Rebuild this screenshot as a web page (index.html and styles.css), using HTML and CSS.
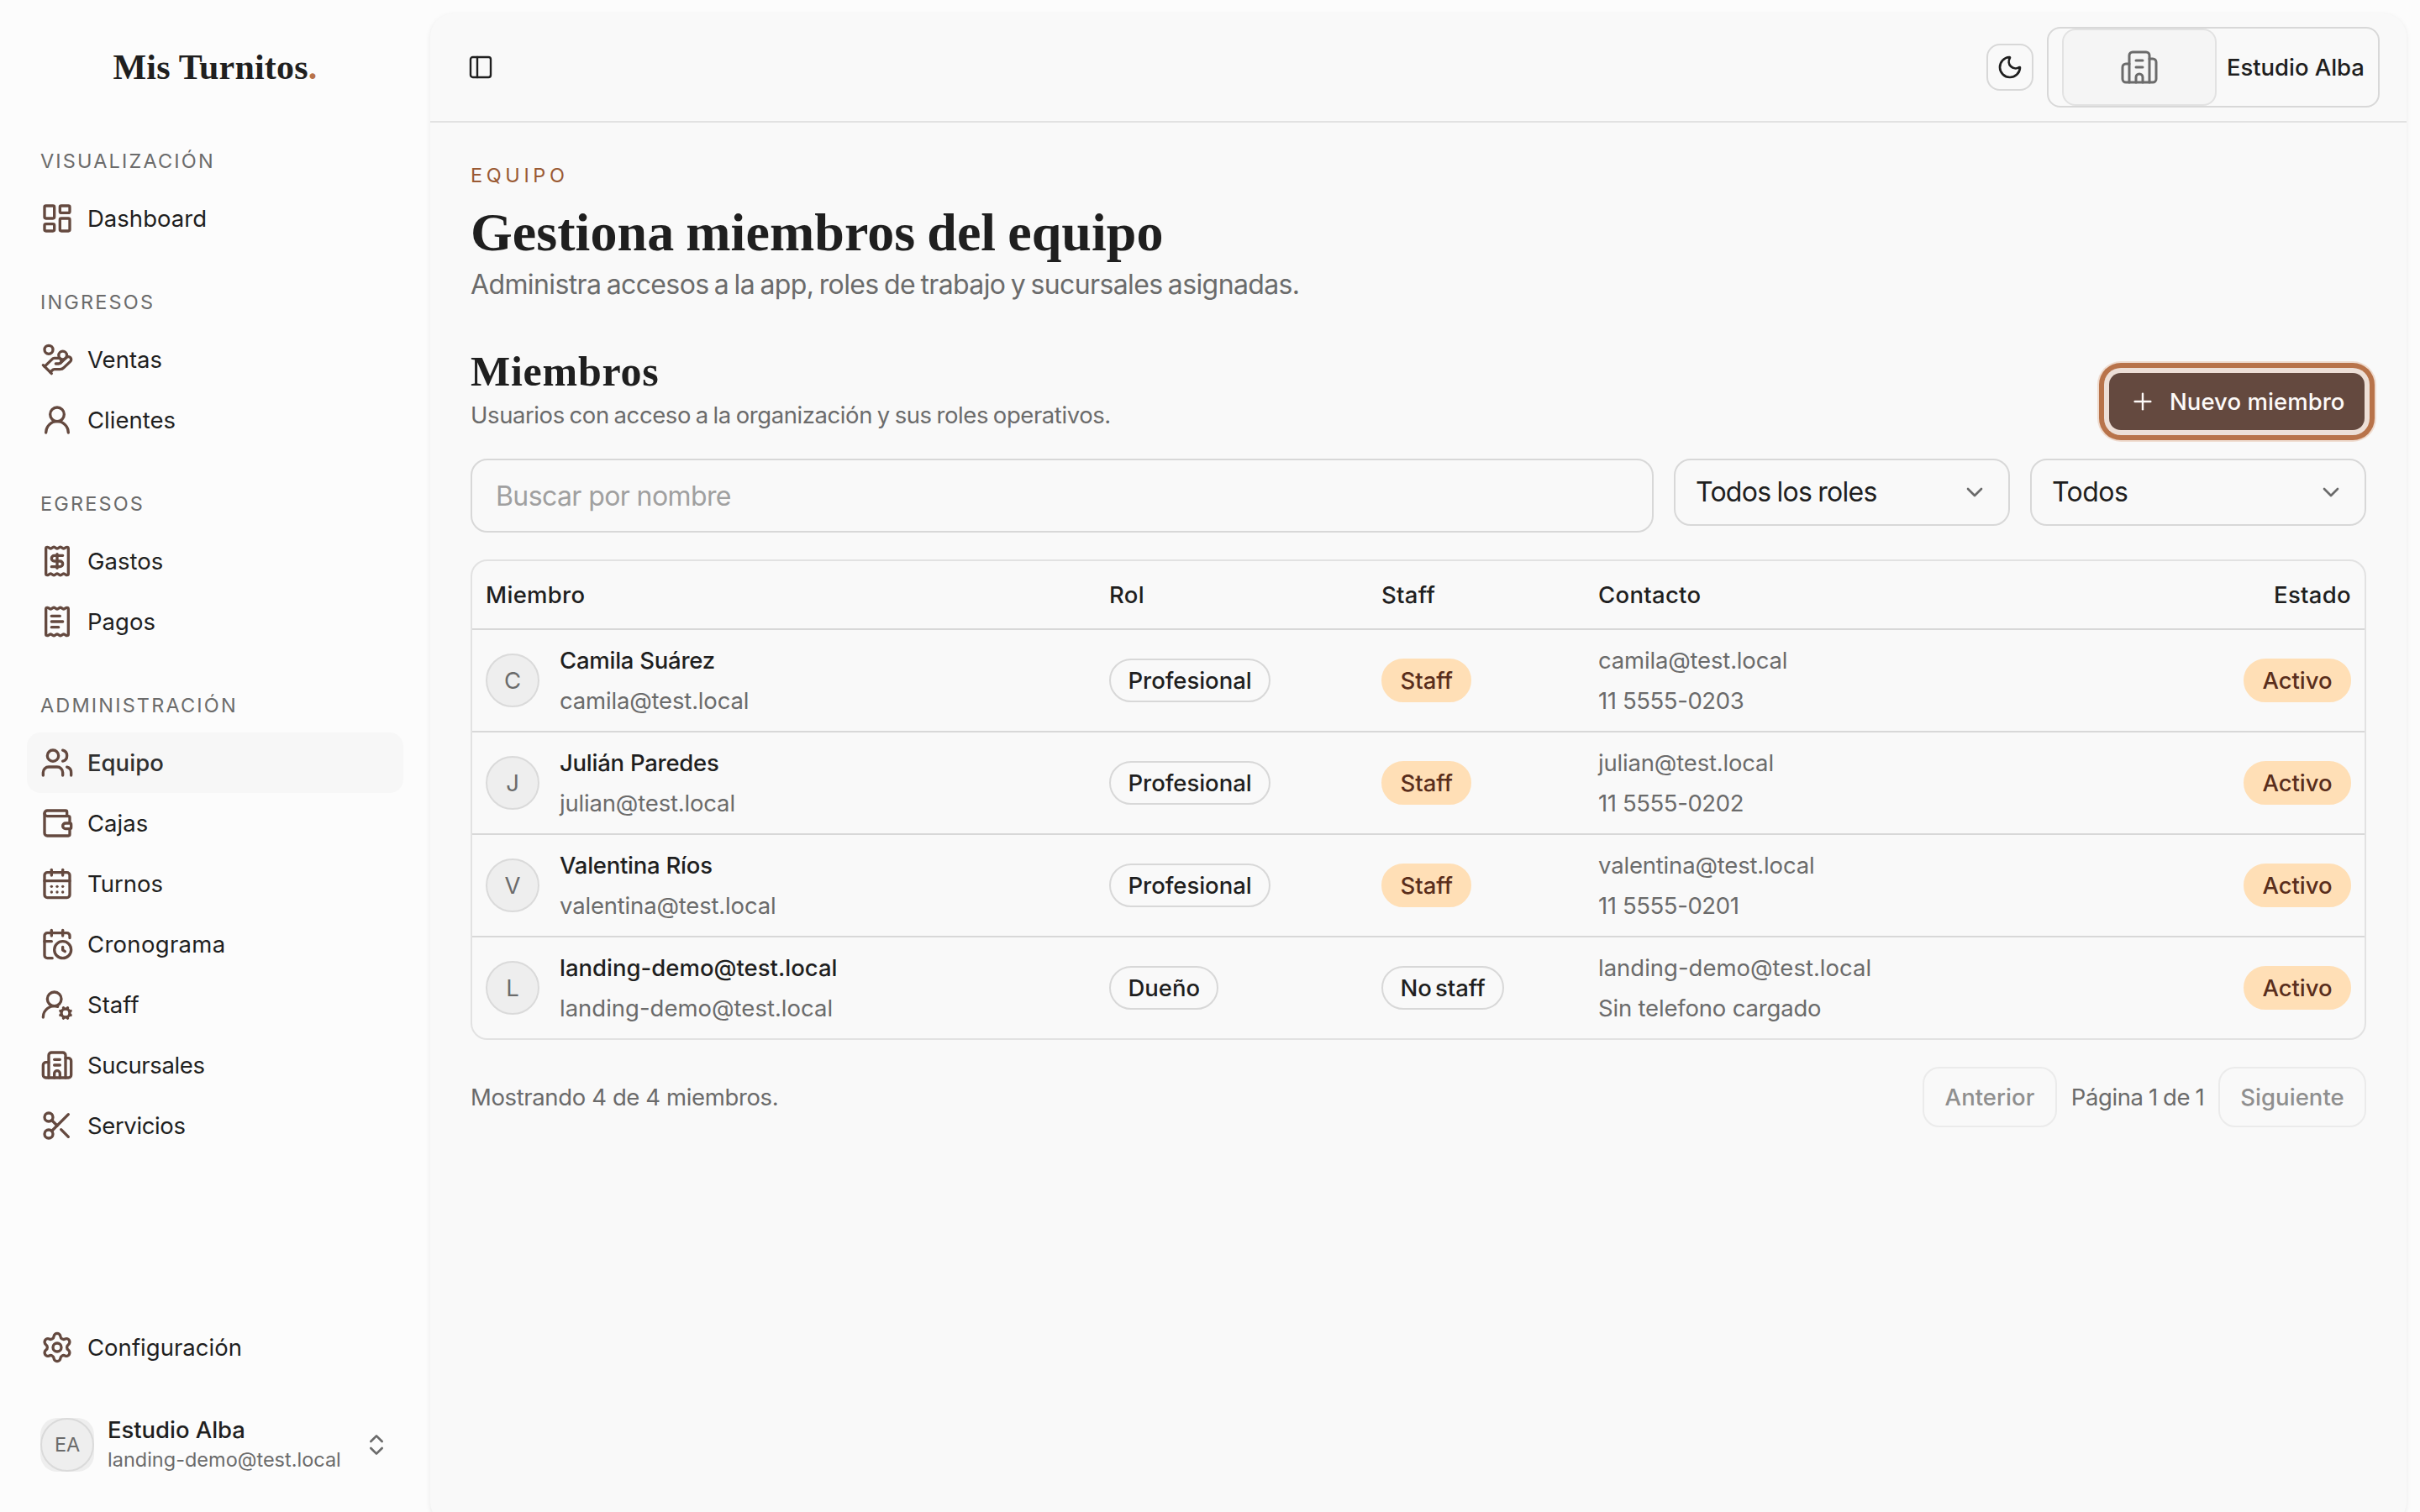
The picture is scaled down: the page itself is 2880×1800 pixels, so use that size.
FILE: index.html
```html
<!DOCTYPE html>
<html lang="es">
<head>
<meta charset="utf-8">
<title>Equipo · Mis Turnitos</title>
<link rel="stylesheet" href="styles.css">
</head>
<body>
<div class="app">
  <aside class="sidebar">
    <div class="logo">Mis Turnitos<span class="logo-dot">.</span></div>

    <nav class="nav">
      <section class="group">
        <h3 class="group-label">VISUALIZACIÓN</h3>
        <a class="item"><svg class="icon" viewBox="0 0 24 24"><rect width="7" height="9" x="3" y="3" rx="1"/><rect width="7" height="5" x="14" y="3" rx="1"/><rect width="7" height="9" x="14" y="12" rx="1"/><rect width="7" height="5" x="3" y="16" rx="1"/></svg><span>Dashboard</span></a>
      </section>

      <section class="group">
        <h3 class="group-label">INGRESOS</h3>
        <a class="item"><svg class="icon" viewBox="0 0 24 24"><path d="M11 15h2a2 2 0 1 0 0-4h-3c-.6 0-1.1.2-1.4.6L3 17"/><path d="m7 21 1.6-1.4c.3-.4.8-.6 1.4-.6h4c1.1 0 2.1-.4 2.8-1.2l4.6-4.4a2 2 0 0 0-2.75-2.91l-4.2 3.9"/><path d="m2 16 6 6"/><circle cx="16" cy="9" r="2.9"/><circle cx="6" cy="5" r="3"/></svg><span>Ventas</span></a>
        <a class="item"><svg class="icon" viewBox="0 0 24 24"><circle cx="12" cy="8" r="5"/><path d="M20 21a8 8 0 0 0-16 0"/></svg><span>Clientes</span></a>
      </section>

      <section class="group">
        <h3 class="group-label">EGRESOS</h3>
        <a class="item"><svg class="icon" viewBox="0 0 24 24"><path d="M4 3a1 1 0 0 1 1-1 1.3 1.3 0 0 1 .7.2l.933.6a1.3 1.3 0 0 0 1.4 0l.934-.6a1.3 1.3 0 0 1 1.4 0l.933.6a1.3 1.3 0 0 0 1.4 0l.933-.6a1.3 1.3 0 0 1 1.4 0l.934.6a1.3 1.3 0 0 0 1.4 0l.933-.6A1.3 1.3 0 0 1 19 2a1 1 0 0 1 1 1v18a1 1 0 0 1-1 1 1.3 1.3 0 0 1-.7-.2l-.933-.6a1.3 1.3 0 0 0-1.4 0l-.934.6a1.3 1.3 0 0 1-1.4 0l-.933-.6a1.3 1.3 0 0 0-1.4 0l-.933.6a1.3 1.3 0 0 1-1.4 0l-.934-.6a1.3 1.3 0 0 0-1.4 0l-.933.6a1.3 1.3 0 0 1-.7.2 1 1 0 0 1-1-1z"/><path d="M12 17V7"/><path d="M16 8h-6a2 2 0 0 0 0 4h4a2 2 0 0 1 0 4H8"/></svg><span>Gastos</span></a>
        <a class="item"><svg class="icon" viewBox="0 0 24 24"><path d="M4 3a1 1 0 0 1 1-1 1.3 1.3 0 0 1 .7.2l.933.6a1.3 1.3 0 0 0 1.4 0l.934-.6a1.3 1.3 0 0 1 1.4 0l.933.6a1.3 1.3 0 0 0 1.4 0l.933-.6a1.3 1.3 0 0 1 1.4 0l.934.6a1.3 1.3 0 0 0 1.4 0l.933-.6A1.3 1.3 0 0 1 19 2a1 1 0 0 1 1 1v18a1 1 0 0 1-1 1 1.3 1.3 0 0 1-.7-.2l-.933-.6a1.3 1.3 0 0 0-1.4 0l-.934.6a1.3 1.3 0 0 1-1.4 0l-.933-.6a1.3 1.3 0 0 0-1.4 0l-.933.6a1.3 1.3 0 0 1-1.4 0l-.934-.6a1.3 1.3 0 0 0-1.4 0l-.933.6a1.3 1.3 0 0 1-.7.2 1 1 0 0 1-1-1z"/><path d="M13 16H8"/><path d="M14 8H8"/><path d="M16 12H8"/></svg><span>Pagos</span></a>
      </section>

      <section class="group">
        <h3 class="group-label">ADMINISTRACIÓN</h3>
        <a class="item active"><svg class="icon" viewBox="0 0 24 24"><path d="M16 21v-2a4 4 0 0 0-4-4H6a4 4 0 0 0-4 4v2"/><path d="M16 3.128a4 4 0 0 1 0 7.744"/><path d="M22 21v-2a4 4 0 0 0-3-3.87"/><circle cx="9" cy="7" r="4"/></svg><span>Equipo</span></a>
        <a class="item"><svg class="icon" viewBox="0 0 24 24"><path d="M19 7V4a1 1 0 0 0-1-1H5a2 2 0 0 0 0 4h15a1 1 0 0 1 1 1v4h-3a2 2 0 0 0 0 4h3a1 1 0 0 0 1-1v-2a1 1 0 0 0-1-1"/><path d="M3 5v14a2 2 0 0 0 2 2h15a1 1 0 0 0 1-1v-4"/></svg><span>Cajas</span></a>
        <a class="item"><svg class="icon" viewBox="0 0 24 24"><path d="M8 2v4"/><path d="M16 2v4"/><rect width="18" height="18" x="3" y="4" rx="2"/><path d="M3 10h18"/><path d="M8 14h.01"/><path d="M12 14h.01"/><path d="M16 14h.01"/><path d="M8 18h.01"/><path d="M12 18h.01"/><path d="M16 18h.01"/></svg><span>Turnos</span></a>
        <a class="item"><svg class="icon" viewBox="0 0 24 24"><path d="M16 14v2.2l1.6 1"/><path d="M16 2v4"/><path d="M21 7.5V6a2 2 0 0 0-2-2H5a2 2 0 0 0-2 2v14a2 2 0 0 0 2 2h3.5"/><path d="M3 10h5"/><path d="M8 2v4"/><circle cx="16" cy="16" r="6"/></svg><span class="wide">Cronograma</span></a>
        <a class="item"><svg class="icon" viewBox="0 0 24 24"><path d="m14.305 19.53.923-.382"/><path d="m15.228 16.852-.923-.383"/><path d="m16.852 15.228-.383-.923"/><path d="m16.852 20.772-.383.924"/><path d="m19.148 15.228.383-.923"/><path d="m19.53 21.696-.382-.924"/><path d="M2 21a8 8 0 0 1 10.434-7.62"/><path d="m20.772 16.852.924-.383"/><path d="m20.772 19.148.924.383"/><circle cx="10" cy="8" r="5"/><circle cx="18" cy="18" r="3"/></svg><span>Staff</span></a>
        <a class="item"><svg class="icon" viewBox="0 0 24 24"><path d="M10 12h4"/><path d="M10 8h4"/><path d="M14 21v-3a2 2 0 0 0-4 0v3"/><path d="M6 10H4a2 2 0 0 0-2 2v7a2 2 0 0 0 2 2h16a2 2 0 0 0 2-2V9a2 2 0 0 0-2-2h-2"/><path d="M6 21V5a2 2 0 0 1 2-2h8a2 2 0 0 1 2 2v16"/></svg><span class="tight">Sucursales</span></a>
        <a class="item"><svg class="icon" viewBox="0 0 24 24"><circle cx="6" cy="6" r="3"/><path d="M8.12 8.12 12 12"/><path d="M20 4 8.12 15.88"/><circle cx="6" cy="18" r="3"/><path d="M14.8 14.8 20 20"/></svg><span class="tight">Servicios</span></a>
      </section>
    </nav>

    <div class="side-footer">
      <a class="item"><svg class="icon" viewBox="0 0 24 24"><path d="M9.671 4.136a2.34 2.34 0 0 1 4.659 0 2.34 2.34 0 0 0 3.319 1.915 2.34 2.34 0 0 1 2.33 4.033 2.34 2.34 0 0 0 0 3.831 2.34 2.34 0 0 1-2.33 4.033 2.34 2.34 0 0 0-3.319 1.915 2.34 2.34 0 0 1-4.659 0 2.34 2.34 0 0 0-3.32-1.915 2.34 2.34 0 0 1-2.33-4.033 2.34 2.34 0 0 0 0-3.831A2.34 2.34 0 0 1 6.35 6.051a2.34 2.34 0 0 0 3.319-1.915"/><circle cx="12" cy="12" r="3"/></svg><span>Configuración</span></a>
      <div class="user">
        <div class="user-avatar"><span class="avatar small">EA</span></div>
        <div class="user-text">
          <span class="user-name">Estudio Alba</span>
          <span class="user-mail">landing-demo@test.local</span>
        </div>
        <svg class="icon updown" viewBox="0 0 24 24"><path d="m7 15 5 5 5-5"/><path d="m7 9 5-5 5 5"/></svg>
      </div>
    </div>
  </aside>

  <main class="main">
    <header class="topbar">
      <svg class="icon panel" viewBox="0 0 24 24"><rect width="18" height="18" x="3" y="3" rx="2"/><path d="M9 3v18"/></svg>
      <div class="top-actions">
        <button class="theme"><svg class="icon ink" viewBox="0 0 24 24"><path d="M20.985 12.486a9 9 0 1 1-9.473-9.472c.405-.022.617.46.402.803a6 6 0 0 0 8.268 8.268c.344-.215.825-.004.803.401"/></svg></button>
        <div class="org">
          <div class="org-logo"><svg class="icon" viewBox="0 0 24 24"><path d="M10 12h4"/><path d="M10 8h4"/><path d="M14 21v-3a2 2 0 0 0-4 0v3"/><path d="M6 10H4a2 2 0 0 0-2 2v7a2 2 0 0 0 2 2h16a2 2 0 0 0 2-2V9a2 2 0 0 0-2-2h-2"/><path d="M6 21V5a2 2 0 0 1 2-2h8a2 2 0 0 1 2 2v16"/></svg></div>
          <span>Estudio Alba</span>
        </div>
      </div>
    </header>

    <div class="content">
      <p class="eyebrow">EQUIPO</p>
      <h1 class="title">Gestiona miembros del equipo</h1>
      <p class="lead">Administra accesos a la app, roles de trabajo y sucursales asignadas.</p>

      <div class="section-head">
        <div>
          <h2 class="subtitle">Miembros</h2>
          <p class="hint">Usuarios con acceso a la organización y sus roles operativos.</p>
        </div>
        <button class="primary"><svg class="icon" viewBox="0 0 24 24"><path d="M5 12h14"/><path d="M12 5v14"/></svg><span>Nuevo miembro</span></button>
      </div>

      <div class="filters">
        <div class="search">Buscar por nombre</div>
        <div class="select"><span class="select-long">Todos los roles</span><svg class="icon" viewBox="0 0 24 24"><path d="m6 9 6 6 6-6"/></svg></div>
        <div class="select"><span>Todos</span><svg class="icon" viewBox="0 0 24 24"><path d="m6 9 6 6 6-6"/></svg></div>
      </div>

      <div class="table">
        <div class="row head"><span>Miembro</span><span>Rol</span><span>Staff</span><span>Contacto</span><span>Estado</span></div>
        <div class="row">
          <div class="member"><span class="avatar">C</span><div class="lines"><span class="name">Camila Suárez</span><span class="muted">camila@test.local</span></div></div>
          <div><span class="badge">Profesional</span></div>
          <div><span class="badge warm">Staff</span></div>
          <div class="lines muted"><span>camila@test.local</span><span class="phone">11 5555-0203</span></div>
          <div><span class="badge warm">Activo</span></div>
        </div>
        <div class="row">
          <div class="member"><span class="avatar">J</span><div class="lines"><span class="name">Julián Paredes</span><span class="muted">julian@test.local</span></div></div>
          <div><span class="badge">Profesional</span></div>
          <div><span class="badge warm">Staff</span></div>
          <div class="lines muted"><span>julian@test.local</span><span class="phone">11 5555-0202</span></div>
          <div><span class="badge warm">Activo</span></div>
        </div>
        <div class="row">
          <div class="member"><span class="avatar">V</span><div class="lines"><span class="name">Valentina Ríos</span><span class="muted">valentina@test.local</span></div></div>
          <div><span class="badge">Profesional</span></div>
          <div><span class="badge warm">Staff</span></div>
          <div class="lines muted"><span>valentina@test.local</span><span class="phone">11 5555-0201</span></div>
          <div><span class="badge warm">Activo</span></div>
        </div>
        <div class="row">
          <div class="member"><span class="avatar">L</span><div class="lines"><span class="name mail">landing-demo@test.local</span><span class="muted mail">landing-demo@test.local</span></div></div>
          <div><span class="badge">Dueño</span></div>
          <div><span class="badge">No staff</span></div>
          <div class="lines muted"><span class="mail">landing-demo@test.local</span><span>Sin telefono cargado</span></div>
          <div><span class="badge warm">Activo</span></div>
        </div>
      </div>

      <footer class="pager">
        <span class="count">Mostrando 4 de 4 miembros.</span>
        <div class="pager-nav">
          <button class="page-btn">Anterior</button>
          <span class="page-info">Página 1 de 1</span>
          <button class="page-btn next">Siguiente</button>
        </div>
      </footer>
    </div>
  </main>
</div>
</body>
</html>
```
FILE: styles.css
```css
:root {
  --ink: #1f1f1f;
  --muted: #6b6b6b;
  --line: #d8d8d8;
  --line-soft: #e2e2e2;
  --brown: #64493f;
  --copper: #b8734a;
  --sans: Inter, "Liberation Sans", sans-serif;
  --serif: "Liberation Serif", "Times New Roman", serif;
}

* { box-sizing: border-box; margin: 0; }

body {
  font: 400 27.5px/40px var(--sans);
  letter-spacing: -.18px;
  color: var(--ink);
  background: #fcfcfc;
  overflow: hidden;
  white-space: nowrap;
}

button { font: inherit; letter-spacing: inherit; color: inherit; background: none; }

.icon {
  width: 32px;
  height: 32px;
  flex: none;
  fill: none;
  stroke: currentColor;
  stroke-width: 2;
  stroke-linecap: round;
  stroke-linejoin: round;
}

.app { display: flex; height: 1800px; overflow: hidden; }

/* Sidebar */
.sidebar { width: 512px; flex: none; display: flex; flex-direction: column; }

.logo {
  height: 160px;
  flex: none;
  font: 700 42px/160px var(--serif);
  letter-spacing: .2px;
  text-align: center;
}
.logo-dot { color: var(--copper); }

.nav { display: flex; flex-direction: column; gap: 32px; padding: 0 32px; }

.group-label {
  height: 64px;
  padding: 0 16px;
  font: 400 23.5px/64px var(--sans);
  letter-spacing: 2.15px;
  color: var(--muted);
}

.item {
  display: flex;
  align-items: center;
  gap: 16px;
  height: 72px;
  padding: 0 16px;
  border-radius: 16px;
  letter-spacing: .02px;
}
.item .icon { width: 40px; height: 40px; color: var(--brown); }
.item.active { background: #f7f7f7; font-weight: 500; color: #303030; }
.item .wide { letter-spacing: .3px; }
.item .tight { letter-spacing: -.38px; }

.side-footer { margin-top: auto; padding: 0 32px 32px; }
.user {
  display: flex;
  align-items: center;
  height: 96px;
  margin-top: 32px;
  padding: 0 16px;
}
.user-avatar { border-radius: 20px; background: #eee; }
.user-text { display: flex; flex-direction: column; gap: 2px; margin: 0 0 2px 16px; flex: 1; }
.user-name { font-weight: 500; line-height: 36px; letter-spacing: -.05px; }
.user-mail { font-size: 23.5px; line-height: 32px; letter-spacing: 0; color: var(--muted); }
.updown { color: var(--muted); }

.avatar {
  display: grid;
  place-items: center;
  width: 64px;
  height: 64px;
  flex: none;
  border: 2px solid #dadada;
  border-radius: 50%;
  background: #eee;
  color: var(--muted);
}
.avatar.small { font-size: 23.5px; }

/* Main panel */
.main {
  width: 2352px;
  height: 1800px;
  flex: none;
  margin-top: 16px;
  border-radius: 28px;
  background: #f9f9f9;
  box-shadow: 0 2px 6px rgba(0, 0, 0, .08);
}

.topbar {
  display: flex;
  align-items: center;
  justify-content: space-between;
  height: 130px;
  padding: 0 32px 0 44px;
  border-bottom: 2px solid var(--line-soft);
}
.panel { stroke-width: 1.8; }
.top-actions { display: flex; align-items: center; gap: 16px; }
.theme {
  display: grid;
  place-items: center;
  width: 56px;
  height: 56px;
  padding: 0;
  border: 2px solid var(--line);
  border-radius: 16px;
}
.org {
  display: flex;
  align-items: center;
  gap: 12px;
  width: 396px;
  height: 96px;
  padding: 0 16px;
  border: 2px solid var(--line);
  border-radius: 16px;
  font-weight: 500;
  letter-spacing: -.05px;
}
.org-logo {
  display: grid;
  place-items: center;
  width: 184px;
  height: 92px;
  border: 2px solid #e2e2e2;
  border-radius: 16px;
  background: #f5f5f5;
  color: var(--muted);
}
.org-logo .icon { width: 48px; height: 48px; stroke-width: 1.5; }

.content { padding: 48px; }

.eyebrow { font-size: 23.5px; line-height: 30px; letter-spacing: 4.6px; color: #9a5a34; }
.title { margin-top: 14px; font: 700 64px/78px var(--serif); letter-spacing: .05px; word-spacing: -2px; }
.lead { font-size: 32px; line-height: 46px; letter-spacing: -.62px; word-spacing: -2px; color: var(--muted); }

.section-head { display: flex; justify-content: space-between; align-items: flex-end; margin-top: 52px; }
.subtitle { font: 700 50px/56px var(--serif); letter-spacing: .75px; }
.hint { line-height: 48px; letter-spacing: -.42px; word-spacing: -1.5px; color: var(--muted); }

.primary {
  display: flex;
  align-items: center;
  gap: 16px;
  width: 304px;
  height: 68px;
  margin: 0 2px 6px 0;
  padding: 0 0 0 24px;
  border: 0;
  border-radius: 14px;
  background: var(--brown);
  box-shadow: 0 0 0 6px #eddfd7, 0 0 0 12px var(--copper), 0 0 0 14px #efdcd0;
  color: #fdfaf8;
  font-weight: 500;
  letter-spacing: .05px;
}
.primary .icon { stroke-width: 1.8; }

.filters { display: flex; align-items: flex-start; gap: 24px; margin-top: 28px; font-size: 32px; }
.search {
  flex: 1;
  height: 88px;
  padding: 0 28px;
  border: 2px solid var(--line);
  border-radius: 20px;
  line-height: 86px;
  letter-spacing: -.6px;
  color: #a0a0a0;
}
.select {
  display: flex;
  align-items: center;
  justify-content: space-between;
  width: 400px;
  height: 80px;
  padding: 0 24px;
  border: 2px solid var(--line);
  border-radius: 20px;
  letter-spacing: -.55px;
}
.select-long { letter-spacing: -.75px; word-spacing: -1px; }
.select .icon { color: var(--muted); }

/* Members table */
.table {
  margin-top: 32px;
  border: 2px solid var(--line-soft);
  border-radius: 20px;
}
.row {
  display: grid;
  grid-template-columns: 742px 324px 258px 1fr auto;
  align-items: center;
  height: 122px;
  padding: 0 16px;
  border-bottom: 2px solid var(--line);
}
.row:last-child { height: 120px; border-bottom: 0; }
.row.head { height: 82px; font-weight: 500; letter-spacing: .3px; }
.member { display: flex; align-items: center; gap: 24px; }
.lines { display: flex; flex-direction: column; line-height: 48px; }
.name { font-weight: 500; letter-spacing: -.25px; }
.lines .mail { letter-spacing: 0; }
.muted { color: var(--muted); }
.phone { letter-spacing: -.4px; }

.badge {
  display: inline-flex;
  align-items: center;
  height: 52px;
  padding: 0 20.5px;
  border: 2px solid var(--line);
  border-radius: 26px;
  font-weight: 500;
  letter-spacing: -.05px;
  word-spacing: -3px;
  vertical-align: middle;
}
.badge.warm { border-color: #ffdfb6; background: #ffdfb6; color: #5a2e1c; }

.pager { display: flex; align-items: center; justify-content: space-between; margin-top: 32px; color: var(--muted); }
.count { letter-spacing: -.38px; }
.pager-nav { display: flex; align-items: center; gap: 16px; }
.page-info { width: 160px; text-align: center; letter-spacing: -.4px; word-spacing: -1px; }
.page-btn {
  width: 160px;
  height: 72px;
  padding: 0;
  border: 2px solid #ebebeb;
  border-radius: 20px;
  font-weight: 500;
  letter-spacing: .05px;
  color: #8f8f8f;
}
.page-btn.next { width: 176px; }
```
